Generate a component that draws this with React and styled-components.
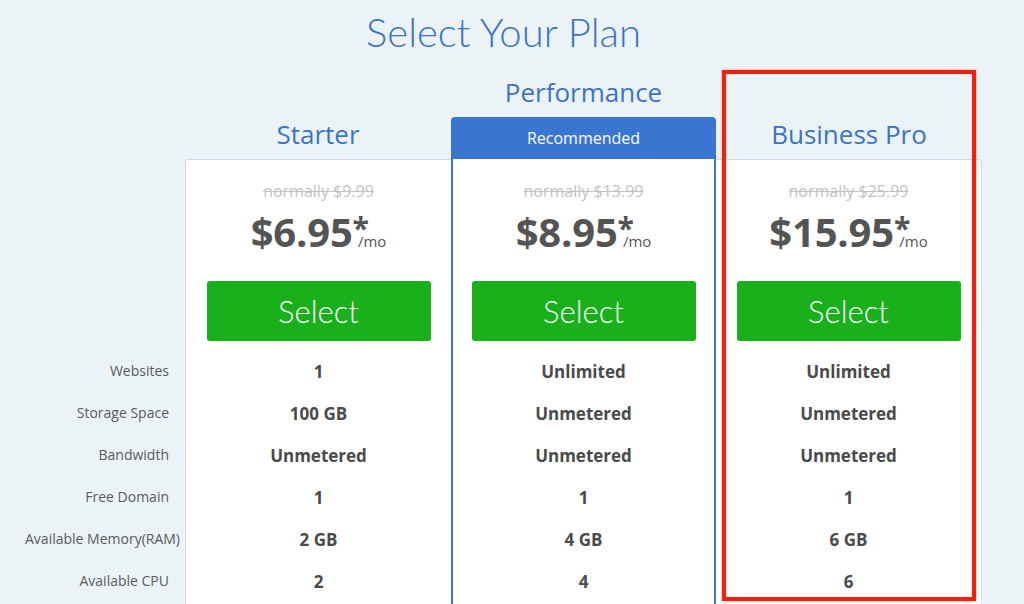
import React from 'react';
import styled, { createGlobalStyle, css } from 'styled-components';

const GlobalStyle = createGlobalStyle`
  html, body {
    margin: 0;
    padding: 0;
    background: #ecf3f7;
    overflow: hidden;
  }
  body {
    font-family: "Open Sans", "Liberation Sans", sans-serif;
  }
`;

const Page = styled.div`
  width: 1024px;
  height: 604px;
  overflow: hidden;
`;

const Title = styled.h1`
  margin: 0;
  height: 70px;
  line-height: 64px;
  padding-right: 17px;
  text-align: center;
  font-family: Lato, "Open Sans", sans-serif;
  font-weight: 300;
  font-size: 40px;
  color: #3a74c6;
`;

const Table = styled.div`
  display: flex;
  align-items: flex-start;
`;

const LabelColumn = styled.div`
  flex: none;
  width: 185px;
  padding-top: 280px;
  display: flex;
  flex-direction: column;
`;

const Label = styled.div`
  flex: none;
  width: 144px;
  margin-left: 25px;
  height: 42px;
  line-height: 42px;
  text-align: right;
  white-space: nowrap;
  font-size: 14px;
  color: #5a5a5a;
`;

const Column = styled.div`
  flex: none;
  position: relative;
  width: ${p => p.$width}px;
  display: flex;
  flex-direction: column;
`;

const Head = styled.div`
  flex: none;
  height: 89px;
  display: flex;
  flex-direction: column;
  justify-content: flex-end;
`;

const PlanName = styled.div`
  flex: none;
  height: 50px;
  line-height: 50px;
  text-align: center;
  font-size: 26px;
  color: #3a74c6;
`;

const Badge = styled.div`
  flex: none;
  height: 42px;
  line-height: 42px;
  text-align: center;
  background: #3a75d2;
  color: #fff;
  font-size: 16px;
  border-radius: 4px 4px 0 0;
`;

const Card = styled.div`
  flex: none;
  background: #fff;
  height: 460px;
  padding-top: 21px;
  display: flex;
  flex-direction: column;
  align-items: center;
  ${p => p.$variant === 'first' && css`
    border-top: 1px solid #d3dadf;
    border-left: 1px solid #d3dadf;
    border-top-left-radius: 3px;
    padding-top: 20px;
  `}
  ${p => p.$variant === 'featured' && css`
    border-left: 2px solid #3a75d2;
    border-right: 2px solid #3a75d2;
  `}
  ${p => p.$variant === 'last' && css`
    border-top: 1px solid #d3dadf;
    border-right: 1px solid #d3dadf;
    border-top-right-radius: 3px;
    padding-top: 20px;
  `}
`;

const OldPrice = styled.div`
  flex: none;
  height: 22px;
  line-height: 22px;
  font-size: 16px;
  color: #c2c2c2;
  text-decoration: line-through;
`;

const PriceRow = styled.div`
  flex: none;
  margin-top: 6px;
  height: 48px;
  line-height: 48px;
  white-space: nowrap;
  color: #545454;
`;

const Amount = styled.span`
  font-size: 40px;
  font-weight: 700;
  letter-spacing: -0.2px;
`;

const Star = styled.span`
  display: inline-block;
  font-size: 30px;
  font-weight: 700;
  line-height: 0;
  vertical-align: 8px;
  margin-right: -11px;
`;

const Per = styled.span`
  font-size: 15px;
  font-weight: 400;
`;

const SelectButton = styled.button`
  flex: none;
  margin-top: 25px;
  width: 224px;
  height: 60px;
  border: 0;
  border-radius: 3px;
  background: #19b01b;
  color: #fff;
  font-family: Lato, "Open Sans", sans-serif;
  font-weight: 300;
  font-size: 31px;
  line-height: 60px;
  padding: 0;
  cursor: pointer;
`;

const Features = styled.div`
  flex: none;
  margin-top: 8px;
  width: 100%;
  display: flex;
  flex-direction: column;
`;

const Value = styled.div`
  flex: none;
  height: 42px;
  line-height: 46px;
  text-align: center;
  font-size: 17px;
  font-weight: 700;
  color: #4a4a4a;
`;

const Highlight = styled.div`
  position: absolute;
  top: 0;
  left: 6px;
  right: 6px;
  height: 531px;
  box-sizing: border-box;
  border: 4px solid #f2200f;
  box-shadow: 0 0 2px rgba(242, 32, 15, 0.5), inset 0 0 1px rgba(242, 32, 15, 0.5);
  pointer-events: none;
`;

const labels = [
  'Websites',
  'Storage Space',
  'Bandwidth',
  'Free Domain',
  'Available Memory(RAM)',
  'Available CPU',
];

const plans = [
  { name: 'Starter', variant: 'first', width: 266, old: '$9.99', price: '$6.95', values: ['1', '100 GB', 'Unmetered', '1', '2 GB', '2'] },
  { name: 'Performance', variant: 'featured', width: 265, badge: 'Recommended', old: '$13.99', price: '$8.95', values: ['Unlimited', 'Unmetered', 'Unmetered', '1', '4 GB', '4'] },
  { name: 'Business Pro', variant: 'last', width: 266, highlight: true, old: '$25.99', price: '$15.95', values: ['Unlimited', 'Unmetered', 'Unmetered', '1', '6 GB', '6'] },
];

export default function App() {
  return (
    <Page>
      <GlobalStyle />
      <Title>Select Your Plan</Title>
      <Table>
        <LabelColumn>
          {labels.map(l => <Label key={l}>{l}</Label>)}
        </LabelColumn>
        {plans.map(p => (
          <Column key={p.name} $width={p.width}>
            <Head>
              <PlanName>{p.name}</PlanName>
              {p.badge && <Badge>{p.badge}</Badge>}
            </Head>
            <Card $variant={p.variant}>
              <OldPrice>normally {p.old}</OldPrice>
              <PriceRow>
                <Amount>{p.price}</Amount>
                <Star>*</Star>
                <Per>/mo</Per>
              </PriceRow>
              <SelectButton>Select</SelectButton>
              <Features>
                {p.values.map((v, i) => <Value key={i}>{v}</Value>)}
              </Features>
            </Card>
            {p.highlight && <Highlight />}
          </Column>
        ))}
      </Table>
    </Page>
  );
}
